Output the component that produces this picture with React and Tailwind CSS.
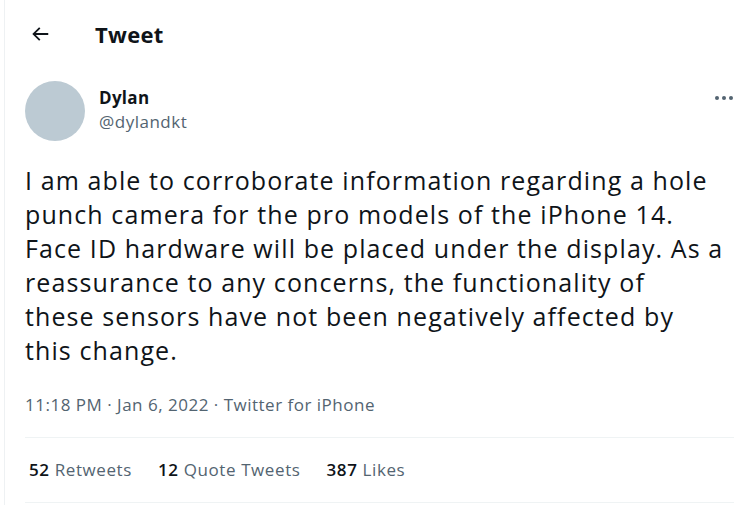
import React from 'react';

const lines = [
  'I am able to corroborate information regarding a hole',
  'punch camera for the pro models of the iPhone 14.',
  'Face ID hardware will be placed under the display. As a',
  'reassurance to any concerns, the functionality of',
  'these sensors have not been negatively affected by',
  'this change.',
];

export default function App() {
  return (
    <div className="w-[750px] h-[505px] bg-white overflow-hidden" style={{ fontFamily: '"Open Sans", "Liberation Sans", Arial, sans-serif' }}>
      <div className="ml-[4px] h-full border-l border-[#eef1f3] pl-[20px] pr-[16px]">
        {/* header */}
        <div className="flex items-center h-[68px]">
          <svg viewBox="0 0 24 24" className="w-[22px] h-[22px] ml-[4px] text-[#0f1419]" fill="currentColor">
            <path d="M7.414 13l5.043 5.04-1.414 1.42L3.586 12l7.457-7.46 1.414 1.42L7.414 11H21v2H7.414z" />
          </svg>
          <h1 className="ml-[44px] text-[22px] font-bold tracking-[0.3px] text-[#0f1419]">Tweet</h1>
        </div>

        {/* author */}
        <div className="flex items-start mt-[13px]">
          <div className="w-[60px] h-[60px] rounded-full bg-[#bccad3]" />
          <div className="ml-[14px] mt-[5px] flex-1">
            <div className="text-[17px] font-bold text-[#0f1419] leading-[24px] tracking-[0.3px]">Dylan</div>
            <div className="text-[17px] text-[#536471] leading-[24px] tracking-[0.5px]">@dylandkt</div>
          </div>
          <div className="flex gap-[3px] mt-[15px] mr-[1px]">
            <span className="w-[4px] h-[4px] rounded-full bg-[#536471]" />
            <span className="w-[4px] h-[4px] rounded-full bg-[#536471]" />
            <span className="w-[4px] h-[4px] rounded-full bg-[#536471]" />
          </div>
        </div>

        {/* body */}
        <div className="mt-[22px] text-[25px] leading-[34px] tracking-[1.1px] text-[#0f1419]">
          {lines.map((l) => (
            <div key={l} className="whitespace-nowrap">{l}</div>
          ))}
        </div>

        {/* time */}
        <div className="mt-[26px] text-[17px] text-[#536471] leading-[24px] tracking-[0.5px]">
          11:18 PM · Jan 6, 2022 · Twitter for iPhone
        </div>

        <div className="mt-[20px] border-t border-[#eff3f4]" />
        <div className="flex gap-[26px] h-[64px] items-center pl-[4px] text-[17px] tracking-[0.6px] text-[#536471]">
          <span><b className="font-semibold text-[#0f1419]">52</b> Retweets</span>
          <span><b className="font-semibold text-[#0f1419]">12</b> Quote Tweets</span>
          <span><b className="font-semibold text-[#0f1419]">387</b> Likes</span>
        </div>
        <div className="border-t border-[#eff3f4]" />
      </div>
    </div>
  );
}
